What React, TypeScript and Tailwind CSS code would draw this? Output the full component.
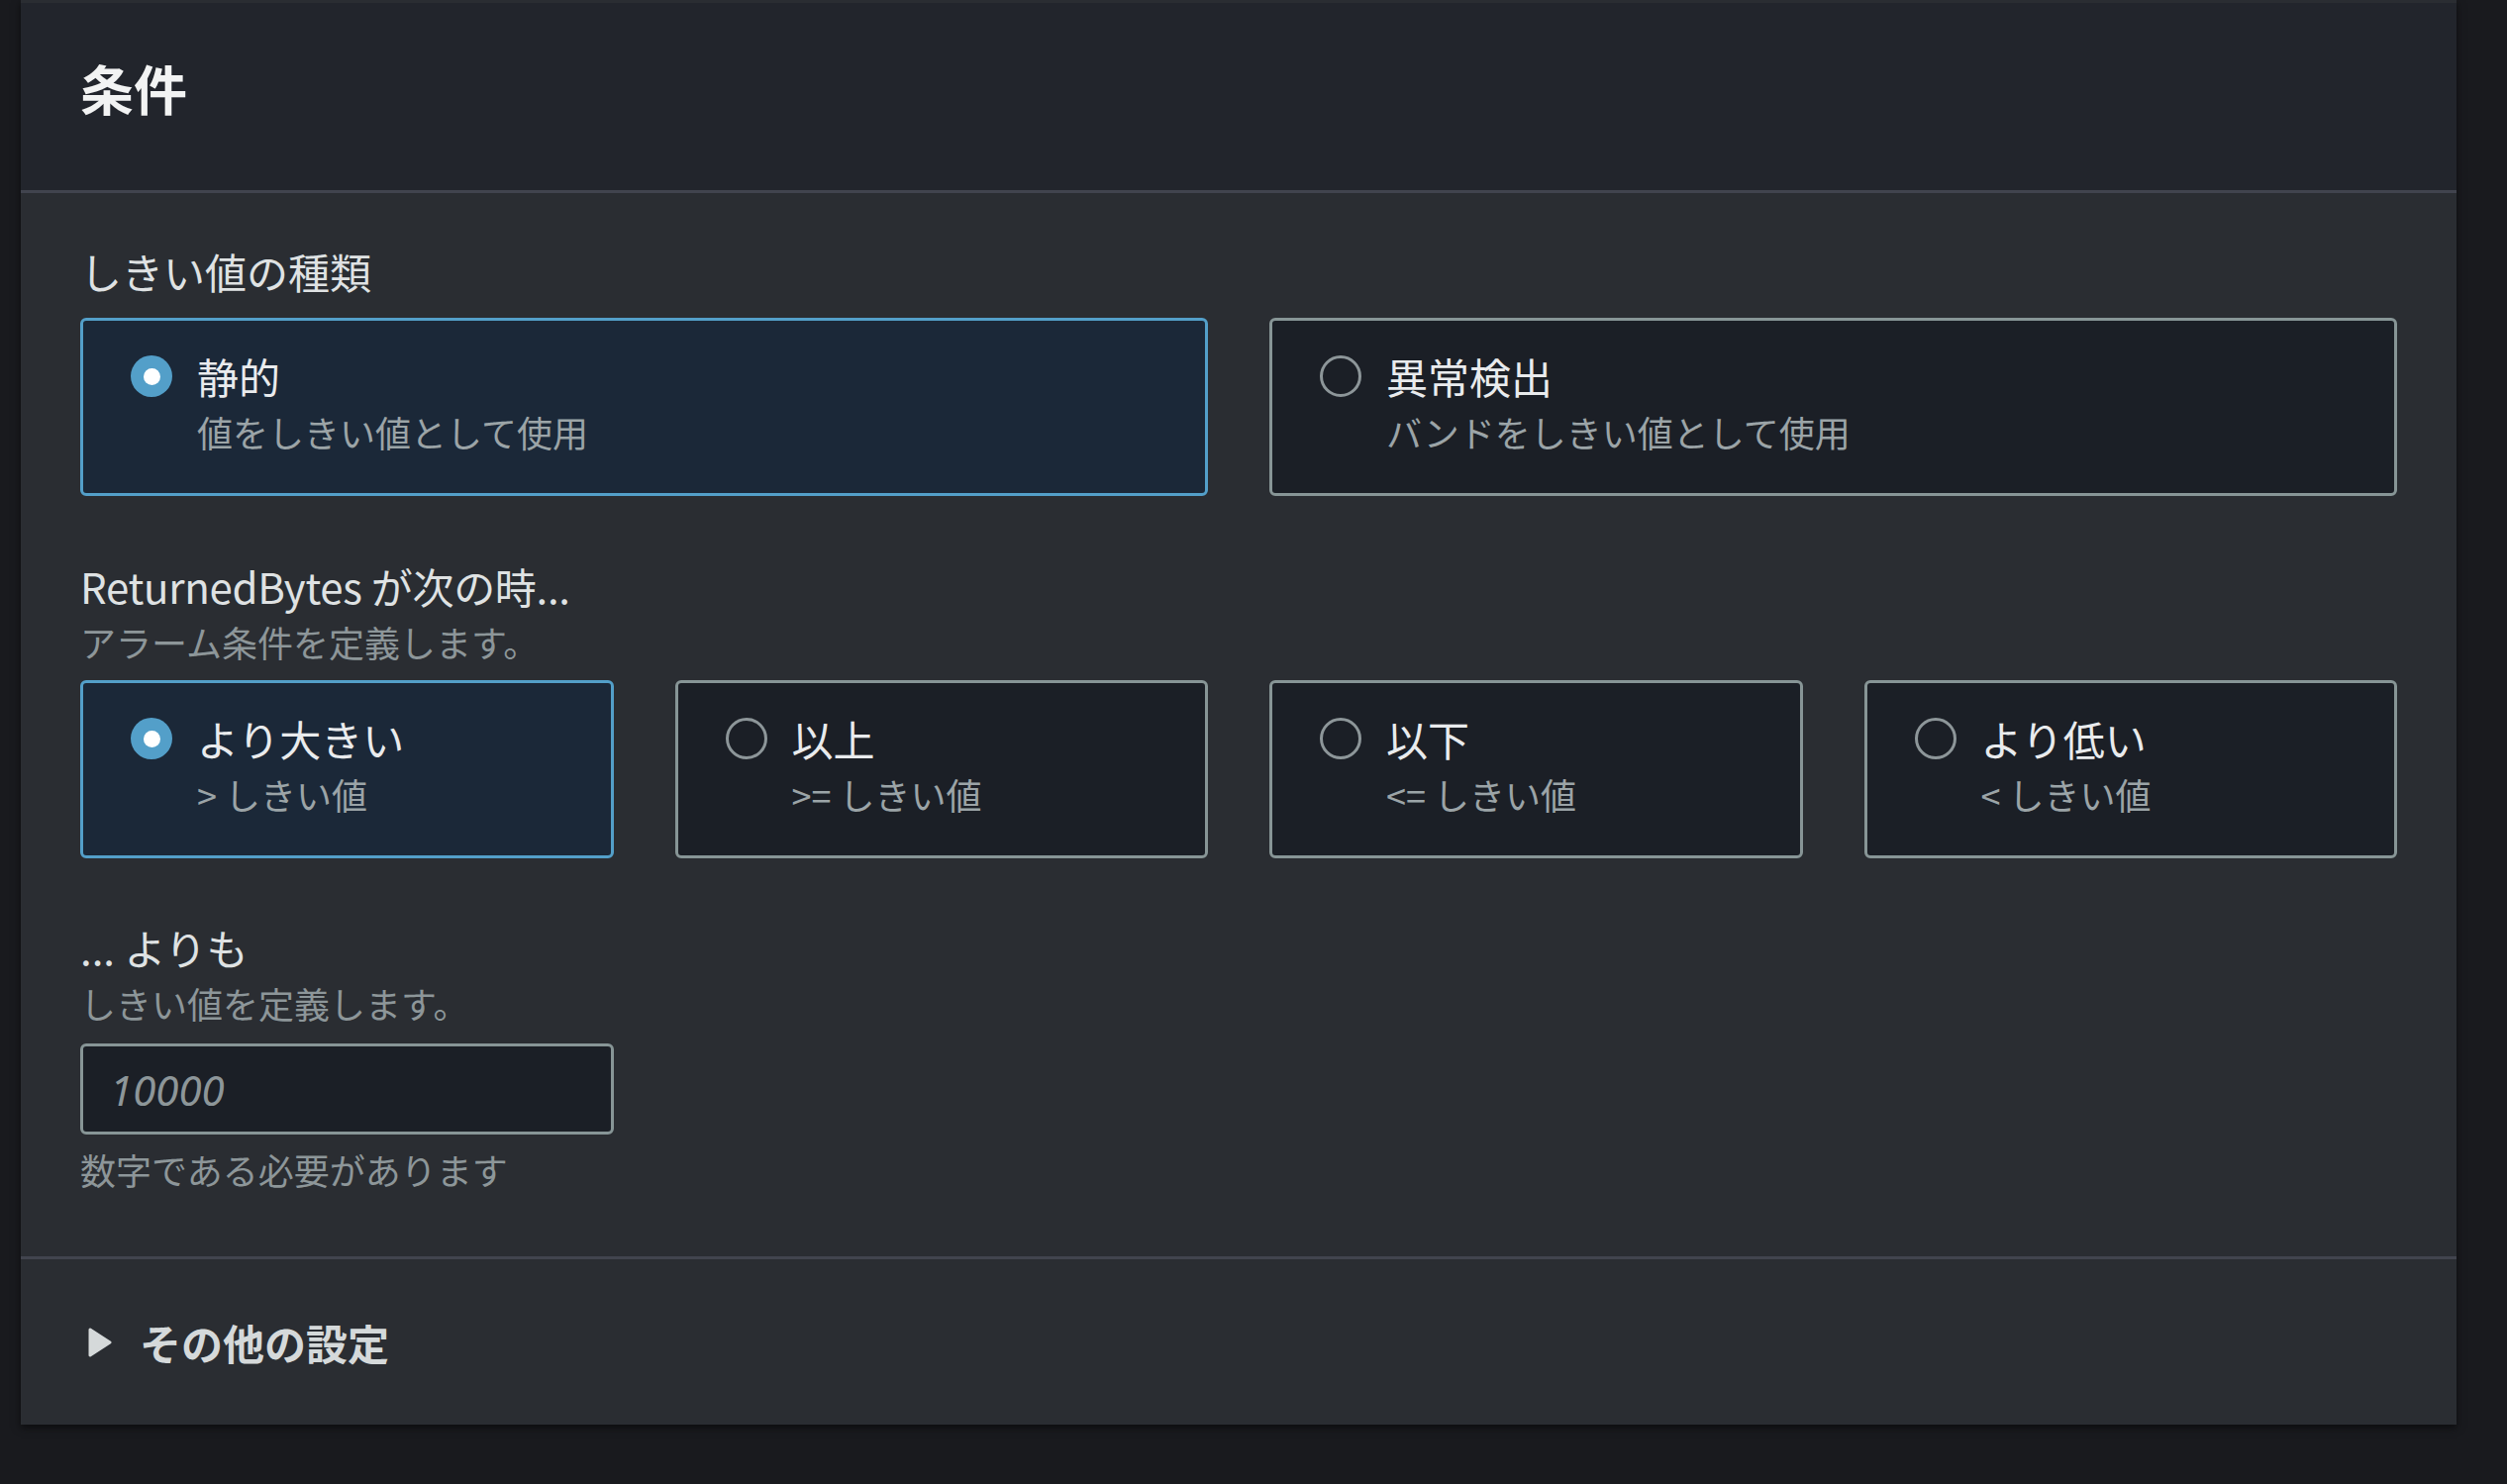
import React from "react";

const FONT = '"Noto Sans CJK JP", "Noto Sans", sans-serif';

function Radio({ checked }: { checked: boolean }) {
    if (checked) {
        return (
            <span className="flex h-[42px] w-[42px] shrink-0 items-center justify-center rounded-full bg-[#539fc9]">
                <span className="h-[17px] w-[17px] rounded-full bg-white" />
            </span>
        );
    }
    return <span className="h-[42px] w-[42px] shrink-0 rounded-full border-[3px] border-[#8d9699]" />;
}

function Tile({ title, desc, checked }: { title: string; desc: string; checked?: boolean }) {
    return (
        <div
            className={
                checked
                    ? "flex items-start rounded-[6px] border-[3px] border-[#539fc9] bg-[#1b2838] pl-[48px] pr-6 pt-[28px] pb-[34px]"
                    : "flex items-start rounded-[6px] border-[3px] border-[#879596] bg-[#1b1f26] pl-[48px] pr-6 pt-[28px] pb-[34px]"
            }
        >
            <div className="flex h-[56px] items-center">
                <Radio checked={!!checked} />
            </div>
            <div className="ml-[25px] flex flex-col">
                <span className="text-[42px] leading-[56px] text-[#e9ebed]">{title}</span>
                <span className="text-[36px] leading-[56px] text-[#9ba4a7]">{desc}</span>
            </div>
        </div>
    );
}

export default function App() {
    return (
        <div className="h-[1499px] w-full overflow-hidden bg-[#191a1e]" style={{ fontFamily: FONT }}>
            <div className="ml-[21px] w-[2460px] border-t-[3px] border-[#2a2d32] bg-[#2a2d32] shadow-[0_3px_8px_rgba(0,0,0,0.55)]">
                {/* Header */}
                <div className="h-[192px] border-b-[3px] border-[#41444e] bg-[#22252c] px-[60px] pt-[51px]">
                    <h2 className="text-[54px] font-bold leading-[70px] text-[#f2f3f3]">条件</h2>
                </div>

                {/* Body */}
                <div className="px-[60px] pt-[51px] pb-[60px]">
                    <div className="text-[42px] leading-[56px] text-[#dfe2e3]">しきい値の種類</div>
                    <div className="mt-[19px] grid grid-cols-2 gap-[62px]">
                        <Tile title="静的" desc="値をしきい値として使用" checked />
                        <Tile title="異常検出" desc="バンドをしきい値として使用" />
                    </div>

                    <div className="mt-[63px] text-[42px] leading-[56px] tracking-[-0.3px] text-[#dfe2e3]">ReturnedBytes が次の時...</div>
                    <div className="text-[36px] leading-[56px] text-[#8d9699]">アラーム条件を定義します。</div>
                    <div className="mt-[11px] grid grid-cols-4 gap-[62px]">
                        <Tile title="より大きい" desc="> しきい値" checked />
                        <Tile title="以上" desc=">= しきい値" />
                        <Tile title="以下" desc="<= しきい値" />
                        <Tile title="より低い" desc="< しきい値" />
                    </div>

                    <div className="mt-[62px] text-[42px] leading-[56px] text-[#dfe2e3]">... よりも</div>
                    <div className="text-[36px] leading-[56px] text-[#8d9699]">しきい値を定義します。</div>
                    <input
                        className="mt-[13px] block h-[92px] w-[539px] rounded-[6px] border-[3px] border-[#879596] bg-[#1b1f26] px-[27px] text-[42px] italic text-[#e9ebed] outline-none placeholder:text-[#8d9699]"
                        style={{ fontFamily: '"Noto Sans", sans-serif' }}
                        placeholder="10000"
                    />
                    <div className="mt-[7px] text-[36px] leading-[56px] text-[#8d9699]">数字である必要があります</div>
                </div>

                {/* Footer */}
                <div className="flex h-[170px] items-center border-t-[3px] border-[#41444e] pl-[68px]">
                    <svg width="24" height="30" viewBox="0 0 24 30" className="shrink-0">
                        <path d="M2 2 L22 15 L2 28 Z" fill="#d5d9da" stroke="#d5d9da" strokeWidth="3" strokeLinejoin="round" />
                    </svg>
                    <span className="ml-[28px] text-[42px] font-bold leading-[56px] text-[#d5d9da]">その他の設定</span>
                </div>
            </div>
        </div>
    );
}
